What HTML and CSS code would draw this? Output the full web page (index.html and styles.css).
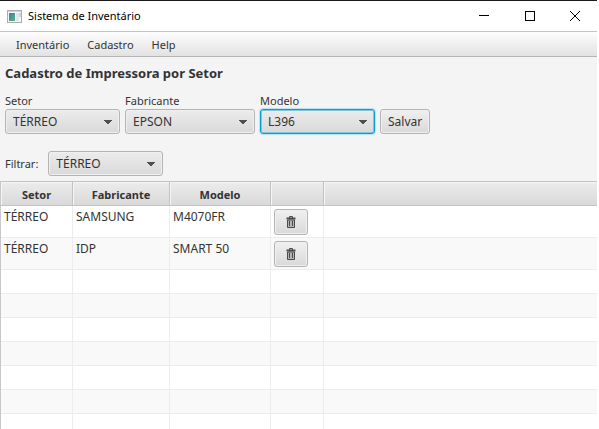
FILE: index.html
```html
<!DOCTYPE html>
<html lang="pt-BR">
<head>
<meta charset="utf-8">
<meta name="viewport" content="width=device-width, initial-scale=1">
<title>Sistema de Inventário</title>
<link rel="stylesheet" href="styles.css">
</head>
<body>
<div class="window">
  <header class="titlebar">
    <svg class="app-icon" width="15" height="13" viewBox="0 0 15 13" aria-hidden="true">
      <defs>
        <linearGradient id="pane" x1="0" y1="0" x2="1" y2="1">
          <stop offset="0" stop-color="#3f7fa6"/>
          <stop offset="1" stop-color="#5fae85"/>
        </linearGradient>
      </defs>
      <rect x="0.500" y="0.500" width="14" height="12" fill="#f4f6f7" stroke="#a9adb0"/>
      <rect x="1" y="1" width="13" height="1" fill="#cfd3d6"/>
      <rect x="2" y="3" width="6" height="8" fill="url(#pane)"/>
      <rect x="9" y="3" width="3" height="8" fill="#e3e6ee"/>
      <rect x="12" y="3" width="2" height="4" fill="#c5d8cf"/>
    </svg>
    <span class="app-title">Sistema de Inventário</span>
    <div class="window-controls">
      <button type="button" aria-label="Minimizar"><svg width="10" height="10" viewBox="0 0 10 10"><path d="M0 4.500H10"/></svg></button>
      <button type="button" aria-label="Maximizar"><svg width="10" height="10" viewBox="0 0 10 10"><rect x="0.500" y="0.500" width="9" height="9"/></svg></button>
      <button type="button" aria-label="Fechar"><svg width="10" height="10" viewBox="0 0 10 10"><path d="M0 0L10 10M10 0L0 10"/></svg></button>
    </div>
  </header>
  <nav class="menubar">
    <a href="#inventario">Inventário</a>
    <a href="#cadastro">Cadastro</a>
    <a href="#help">Help</a>
  </nav>
  <main>
    <h1>Cadastro de Impressora por Setor</h1>
    <form class="entry">
      <div class="field">
        <label for="setor">Setor</label>
        <select id="setor" class="medium"><option>TÉRREO</option></select>
      </div>
      <div class="field">
        <label for="fabricante">Fabricante</label>
        <select id="fabricante" class="wide"><option>EPSON</option></select>
      </div>
      <div class="field">
        <label for="modelo">Modelo</label>
        <select id="modelo" class="medium active"><option>L396</option></select>
      </div>
      <button type="button" class="btn save">Salvar</button>
    </form>
    <div class="filter">
      <label for="filtrar">Filtrar:</label>
      <select id="filtrar" class="medium"><option>TÉRREO</option></select>
    </div>
    <table>
      <colgroup><col class="c-setor"><col class="c-fabricante"><col class="c-modelo"><col class="c-action"><col></colgroup>
      <thead>
        <tr><th>Setor</th><th>Fabricante</th><th>Modelo</th><th></th><th></th></tr>
      </thead>
      <tbody>
        <tr class="filled"><td>TÉRREO</td><td>SAMSUNG</td><td>M4070FR</td>
          <td><button type="button" class="btn trash" aria-label="Excluir"><svg width="10" height="12" viewBox="0 0 10 12"><path class="line" d="M3.500 2V0.500H6.500V2"/><path class="solid" d="M0.500 1.500H9.500V3.500H0.500Z"/><path class="body" d="M1.500 4V11.500H8.500V4Z"/><path class="line" d="M3.500 5V10M6.500 5V10"/></svg></button></td><td></td></tr>
        <tr class="filled"><td>TÉRREO</td><td>IDP</td><td>SMART 50</td>
          <td><button type="button" class="btn trash" aria-label="Excluir"><svg width="10" height="12" viewBox="0 0 10 12"><path class="line" d="M3.500 2V0.500H6.500V2"/><path class="solid" d="M0.500 1.500H9.500V3.500H0.500Z"/><path class="body" d="M1.500 4V11.500H8.500V4Z"/><path class="line" d="M3.500 5V10M6.500 5V10"/></svg></button></td><td></td></tr>
        <tr><td></td><td></td><td></td><td></td><td></td></tr>
        <tr><td></td><td></td><td></td><td></td><td></td></tr>
        <tr><td></td><td></td><td></td><td></td><td></td></tr>
        <tr><td></td><td></td><td></td><td></td><td></td></tr>
        <tr><td></td><td></td><td></td><td></td><td></td></tr>
        <tr><td></td><td></td><td></td><td></td><td></td></tr>
        <tr><td></td><td></td><td></td><td></td><td></td></tr>
      </tbody>
    </table>
  </main>
</div>
</body>
</html>
```

FILE: styles.css
```css
* { box-sizing: border-box; }

html, body { height: 100%; }

body {
  margin: 0;
  overflow: hidden;
  background: #fff;
  color: #333;
  font: 12px/16px "Noto Sans", "Open Sans", sans-serif;
}

button, select { font: inherit; color: inherit; }

.window {
  height: 100%;
  margin-right: 2px;
  overflow: hidden;
  border-top: 1px solid #1c1a1c;
  background: #f4f4f4;
}

.titlebar, .menubar, label, th { font-size: 11px; }

.titlebar {
  display: flex;
  align-items: center;
  height: 30px;
  padding-left: 7px;
  background: #fff;
  color: #000;
}

.app-title { margin-left: 6px; }

.window-controls { display: flex; margin-left: auto; }

.window-controls button {
  display: grid;
  place-items: center;
  width: 46px;
  height: 30px;
  padding: 0;
  border: 0;
  background: none;
}

.window-controls button:last-child { width: 44px; }

.window-controls svg { fill: none; stroke: #000; }

.menubar {
  display: flex;
  gap: 2px;
  height: 26px;
  padding: 0 8px;
  border-top: 1px solid #c4c4c4;
  border-bottom: 1px solid #b5b5b5;
  background: linear-gradient(#fdfdfd, #e2e2e2);
}

.menubar a {
  padding: 5px 8px;
  color: #333;
  text-decoration: none;
}

h1 {
  margin: 0;
  padding: 7px 5px 0;
  font-size: 13px;
  line-height: 18px;
}

.entry {
  display: flex;
  align-items: flex-end;
  gap: 5px;
  padding: 11px 5px 0;
}

.field { display: flex; flex-direction: column; }

select, .btn {
  height: 25px;
  border: 1px solid #b4b4b4;
  border-radius: 3px;
  background: linear-gradient(#f0f0f0, #d9d9d9);
  box-shadow: inset 0 0 0 1px #f0f0f0;
}

select {
  appearance: none;
  padding: 0 20px 0 7px;
  background:
    linear-gradient(to bottom right, #505050 50%, transparent 52%) right 7px top 10px / 4px 4px no-repeat,
    linear-gradient(to bottom left, #505050 50%, transparent 52%) right 11px top 10px / 4px 4px no-repeat,
    linear-gradient(#ececec, #d9d9d9);
}

.medium { width: 115px; }
.wide { width: 130px; }

.active {
  border-color: #039ed3;
  box-shadow: inset 0 0 0 1px #7cc8e2, 0 0 1px 1px #b9e2f0;
}

.save { padding: 0 7px; }

.filter {
  display: flex;
  align-items: center;
  gap: 10px;
  padding: 17px 5px 5px;
}

table {
  width: 100%;
  table-layout: fixed;
  border-collapse: separate;
  border-spacing: 0;
  border-top: 1px solid #c2c2c2;
  border-left: 1px solid #c8c8c8;
  background: #fff;
}

.c-setor { width: 72px; }
.c-fabricante { width: 97px; }
.c-modelo { width: 101px; }
.c-action { width: 53px; }

th {
  height: 24px;
  padding: 2px 0 0;
  border-right: 1px solid #c2c2c2;
  border-bottom: 1px solid #c2c2c2;
  background: linear-gradient(#ececec, #d9d9d9);
  box-shadow: inset 1px 1px 0 #f5f5f5;
}

td {
  height: 24px;
  padding: 3px 3px 2px;
  border-right: 1px solid #ededed;
  border-bottom: 1px solid #ededed;
  vertical-align: top;
}

th:last-child, td:last-child { border-right: 0; }

tr:nth-child(even) td { background: #f9f9f9; }

.filled td { height: 32px; }

.trash {
  display: grid;
  place-items: center;
  width: 34px;
  height: 26px;
  padding: 0;
}

.line { fill: none; stroke: #4a4a4a; }
.solid { fill: #4a4a4a; }
.body { fill: #b5b5b5; stroke: #4a4a4a; }
```
